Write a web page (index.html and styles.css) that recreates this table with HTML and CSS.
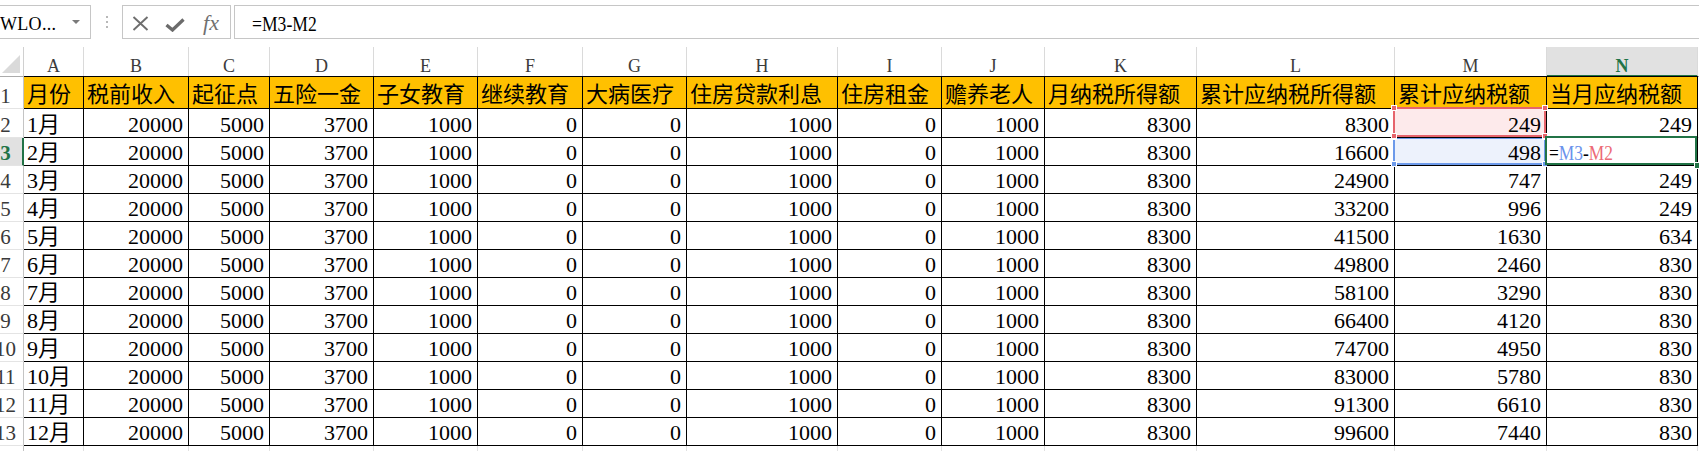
FILE: index.html
```html
<!DOCTYPE html>
<html lang="zh-CN">
<head>
<meta charset="utf-8">
<title>个税计算表</title>
<link rel="stylesheet" href="styles.css">
</head>
<body>
<div class="fbar">
  <div class="namebox"><span class="nbtext">WLO...</span><span class="dd"></span></div>
  <div class="grip"><svg width="4" height="12" viewBox="0 0 4 12"><rect x="1" y="0" width="2" height="2" fill="#b8b8b8"/><rect x="1" y="5" width="2" height="2" fill="#b8b8b8"/><rect x="1" y="10" width="2" height="2" fill="#b8b8b8"/></svg></div>
  <div class="fxbox">
    <span class="slot s1"><svg width="17" height="15" viewBox="0 0 17 15"><path d="M1.5 1 L15.5 14 M15.5 1 L1.5 14" stroke="#6e6e6e" stroke-width="1.9" fill="none"/></svg></span>
    <span class="slot s2"><svg width="20" height="14" viewBox="0 0 20 14"><path d="M1.5 7 L7.5 12 L18.5 1.5" stroke="#6b6b6b" stroke-width="3.3" fill="none"/></svg></span>
    <span class="slot s3"><span class="fx">fx</span></span>
  </div>
  <div class="formula"><span class="ftext">=M3-M2</span></div>
</div>

<div class="sheet">
  <div class="corner"><span class="tri"></span></div>
  <div class="ch">A</div><div class="ch">B</div><div class="ch">C</div><div class="ch">D</div><div class="ch">E</div><div class="ch">F</div><div class="ch">G</div><div class="ch">H</div><div class="ch">I</div><div class="ch">J</div><div class="ch">K</div><div class="ch">L</div><div class="ch">M</div><div class="ch chsel">N</div><div class="chx"></div>

  <div class="rh">1</div>
  <div class="c h">月份</div><div class="c h">税前收入</div><div class="c h">起征点</div><div class="c h">五险一金</div><div class="c h">子女教育</div><div class="c h">继续教育</div><div class="c h">大病医疗</div><div class="c h">住房贷款利息</div><div class="c h">住房租金</div><div class="c h">赡养老人</div><div class="c h">月纳税所得额</div><div class="c h">累计应纳税所得额</div><div class="c h">累计应纳税额</div><div class="c h">当月应纳税额</div><div class="xc"></div>

  <div class="rh">2</div>
  <div class="c t">1月</div><div class="c">20000</div><div class="c">5000</div><div class="c">3700</div><div class="c">1000</div><div class="c">0</div><div class="c">0</div><div class="c">1000</div><div class="c">0</div><div class="c">1000</div><div class="c">8300</div><div class="c">8300</div>
  <div class="c ref-red">249<span class="hd hr tl"></span><span class="hd hr tr"></span><span class="hd hr bl"></span><span class="hd hr br"></span></div>
  <div class="c">249</div><div class="xc"></div>

  <div class="rh rhsel">3</div>
  <div class="c t">2月</div><div class="c">20000</div><div class="c">5000</div><div class="c">3700</div><div class="c">1000</div><div class="c">0</div><div class="c">0</div><div class="c">1000</div><div class="c">0</div><div class="c">1000</div><div class="c">8300</div><div class="c">16600</div>
  <div class="c ref-blue">498<span class="hd hb tl"></span><span class="hd hb tr"></span><span class="hd hb bl"></span><span class="hd hb br"></span></div>
  <div class="c t active"><span class="ctext">=<span class="rb">M3</span>-<span class="rr">M2</span></span><span class="fill"></span></div><div class="xc"></div>

  <div class="rh">4</div>
  <div class="c t">3月</div><div class="c">20000</div><div class="c">5000</div><div class="c">3700</div><div class="c">1000</div><div class="c">0</div><div class="c">0</div><div class="c">1000</div><div class="c">0</div><div class="c">1000</div><div class="c">8300</div><div class="c">24900</div><div class="c">747</div><div class="c">249</div><div class="xc"></div>

  <div class="rh">5</div>
  <div class="c t">4月</div><div class="c">20000</div><div class="c">5000</div><div class="c">3700</div><div class="c">1000</div><div class="c">0</div><div class="c">0</div><div class="c">1000</div><div class="c">0</div><div class="c">1000</div><div class="c">8300</div><div class="c">33200</div><div class="c">996</div><div class="c">249</div><div class="xc"></div>

  <div class="rh">6</div>
  <div class="c t">5月</div><div class="c">20000</div><div class="c">5000</div><div class="c">3700</div><div class="c">1000</div><div class="c">0</div><div class="c">0</div><div class="c">1000</div><div class="c">0</div><div class="c">1000</div><div class="c">8300</div><div class="c">41500</div><div class="c">1630</div><div class="c">634</div><div class="xc"></div>

  <div class="rh">7</div>
  <div class="c t">6月</div><div class="c">20000</div><div class="c">5000</div><div class="c">3700</div><div class="c">1000</div><div class="c">0</div><div class="c">0</div><div class="c">1000</div><div class="c">0</div><div class="c">1000</div><div class="c">8300</div><div class="c">49800</div><div class="c">2460</div><div class="c">830</div><div class="xc"></div>

  <div class="rh">8</div>
  <div class="c t">7月</div><div class="c">20000</div><div class="c">5000</div><div class="c">3700</div><div class="c">1000</div><div class="c">0</div><div class="c">0</div><div class="c">1000</div><div class="c">0</div><div class="c">1000</div><div class="c">8300</div><div class="c">58100</div><div class="c">3290</div><div class="c">830</div><div class="xc"></div>

  <div class="rh">9</div>
  <div class="c t">8月</div><div class="c">20000</div><div class="c">5000</div><div class="c">3700</div><div class="c">1000</div><div class="c">0</div><div class="c">0</div><div class="c">1000</div><div class="c">0</div><div class="c">1000</div><div class="c">8300</div><div class="c">66400</div><div class="c">4120</div><div class="c">830</div><div class="xc"></div>

  <div class="rh">10</div>
  <div class="c t">9月</div><div class="c">20000</div><div class="c">5000</div><div class="c">3700</div><div class="c">1000</div><div class="c">0</div><div class="c">0</div><div class="c">1000</div><div class="c">0</div><div class="c">1000</div><div class="c">8300</div><div class="c">74700</div><div class="c">4950</div><div class="c">830</div><div class="xc"></div>

  <div class="rh">11</div>
  <div class="c t">10月</div><div class="c">20000</div><div class="c">5000</div><div class="c">3700</div><div class="c">1000</div><div class="c">0</div><div class="c">0</div><div class="c">1000</div><div class="c">0</div><div class="c">1000</div><div class="c">8300</div><div class="c">83000</div><div class="c">5780</div><div class="c">830</div><div class="xc"></div>

  <div class="rh">12</div>
  <div class="c t">11月</div><div class="c">20000</div><div class="c">5000</div><div class="c">3700</div><div class="c">1000</div><div class="c">0</div><div class="c">0</div><div class="c">1000</div><div class="c">0</div><div class="c">1000</div><div class="c">8300</div><div class="c">91300</div><div class="c">6610</div><div class="c">830</div><div class="xc"></div>

  <div class="rh">13</div>
  <div class="c t">12月</div><div class="c">20000</div><div class="c">5000</div><div class="c">3700</div><div class="c">1000</div><div class="c">0</div><div class="c">0</div><div class="c">1000</div><div class="c">0</div><div class="c">1000</div><div class="c">8300</div><div class="c">99600</div><div class="c">7440</div><div class="c">830</div><div class="xc"></div>

  <div class="rh rhlast"></div>
  <div class="xr"></div><div class="xr"></div><div class="xr"></div><div class="xr"></div><div class="xr"></div><div class="xr"></div><div class="xr"></div><div class="xr"></div><div class="xr"></div><div class="xr"></div><div class="xr"></div><div class="xr"></div><div class="xr"></div><div class="xr"></div><div class="xr"></div>
</div>
</body>
</html>
```

FILE: styles.css
```css
* { box-sizing: border-box; }

html, body {
  margin: 0;
  padding: 0;
  overflow: hidden;
  background: #ffffff;
}

body {
  width: 1699px;
  height: 451px;
  font-family: "Liberation Serif", "Noto Sans CJK SC", serif;
  color: #000;
}

/* ---------- formula bar ---------- */
.fbar {
  display: flex;
  align-items: flex-start;
  height: 47px;
}

.namebox {
  margin-left: -22px;
  margin-top: 5px;
  width: 113px;
  height: 34px;
  border: 1px solid #c6c6c6;
  display: flex;
  align-items: center;
  padding: 4px 10px 0 21px;
  font-size: 18px;
  line-height: 18px;
}

.nbtext { white-space: nowrap; letter-spacing: 0.3px; }

.dd {
  margin-left: auto;
  margin-top: -5px;
  width: 0;
  height: 0;
  border-left: 4px solid transparent;
  border-right: 4px solid transparent;
  border-top: 4px solid #7a7a7a;
}

.grip {
  width: 31px;
  height: 47px;
  display: flex;
  justify-content: center;
  padding-top: 16px;
}

.fxbox {
  margin-top: 5px;
  width: 109px;
  height: 34px;
  border: 1px solid #c6c6c6;
  display: flex;
  align-items: center;
}

.slot {
  display: flex;
  justify-content: center;
  align-items: center;
  height: 32px;
}
.s1 { width: 34px; padding-top: 3px; }
.s2 { width: 36px; padding-top: 6px; }
.s3 { width: 36px; padding-top: 1px; }

.fx {
  font-family: "Liberation Serif", serif;
  font-style: italic;
  font-size: 22px;
  color: #707070;
  line-height: 22px;
}

.formula {
  margin-top: 5px;
  margin-left: 3px;
  flex: 1;
  height: 34px;
  border: 1px solid #c6c6c6;
  border-right: none;
  display: flex;
  align-items: center;
  padding: 3px 0 0 17px;
}

.ftext {
  display: inline-block;
  font-size: 22px;
  line-height: 22px;
  transform: scaleX(0.8);
  transform-origin: left center;
  white-space: nowrap;
}

/* ---------- sheet grid ---------- */
.sheet {
  display: grid;
  grid-template-columns: 36px 60px 105px 81px 104px 104px 105px 104px 151px 104px 103px 152px 198px 152px 151px 60px;
  grid-template-rows: 30px 32px 29px repeat(11, 28px) 10px;
  margin-left: -12px;
  width: max-content;
}

.corner {
  border-right: 1px solid #d0d0d0;
  border-bottom: 1px solid #ababab;
  display: flex;
  justify-content: flex-end;
  align-items: flex-end;
  padding: 0 3px 3px 0;
}

.tri {
  width: 0;
  height: 0;
  border-left: 18px solid transparent;
  border-bottom: 18px solid #dadada;
}

.ch {
  border-right: 1px solid #dadada;
  border-bottom: 1px solid #000;
  display: flex;
  justify-content: center;
  align-items: flex-end;
  padding-bottom: 1px;
  font-size: 18px;
  line-height: 18px;
  color: #3c3c3c;
}

.chsel {
  background: #e1e1e1;
  color: #217346;
  font-weight: bold;
  border-bottom: 2px solid #217346;
  padding-bottom: 0;
}

.chx {
  border-bottom: 1px solid #ababab;
}

.rh {
  border-right: 1px solid #c4c4c4;
  border-bottom: 1px solid #e4e4e4;
  display: flex;
  justify-content: center;
  align-items: flex-end;
  padding-bottom: 1px;
  font-size: 21px;
  line-height: 21px;
  color: #3a3a3a;
}

.rhsel {
  background: #e1e1e1;
  color: #217346;
  font-weight: bold;
  border-right: 2px solid #217346;
  padding-left: 1px;
}

.rhlast { border-bottom: none; }

.c {
  border-right: 1px solid #000;
  border-bottom: 1px solid #000;
  display: flex;
  justify-content: flex-end;
  align-items: flex-end;
  padding: 0 5px 0 3px;
  font-size: 22px;
  line-height: 24px;
  white-space: nowrap;
  overflow: hidden;
}

.t { justify-content: flex-start; }

.h {
  background: #ffc000;
  border-top: 1px solid #000;
  margin-top: -1px;
  justify-content: flex-start;
  align-items: center;
  font-family: "Noto Sans CJK SC", sans-serif;
  font-size: 22px;
  line-height: 22px;
  padding-bottom: 1px;
}

.xc {
  border-bottom: 1px solid #e1e1e1;
}

.xr {
  border-right: 1px solid #e1e1e1;
}

/* ---------- formula references & active cell ---------- */
.ref-red,
.ref-blue,
.active {
  position: relative;
  overflow: visible;
}

.ref-red { background: #fdeaeb; z-index: 3; }
.ref-blue { background: #edf2fc; z-index: 2; }
.active { z-index: 4; padding-left: 2px; }

.ref-red::after,
.ref-blue::after,
.active::after {
  content: "";
  position: absolute;
  left: -2px;
  right: 0;
  bottom: 0;
  border: 2px solid #e6646c;
  pointer-events: none;
}

.ref-red::after { top: -2px; }
.ref-blue::after { top: -1px; border-color: #6d9aea; }
.active::after { top: -2px; border-color: #217346; }

.hd {
  position: absolute;
  width: 6px;
  height: 6px;
  border: 1px solid #fff;
  z-index: 1;
}
.hr { background: #e6646c; }
.hb { background: #6d9aea; }
.tl { left: -4px; top: -4px; }
.tr { right: -2px; top: -4px; }
.bl { left: -4px; bottom: -2px; }
.br { right: -2px; bottom: -2px; }

.ctext {
  display: inline-block;
  font-size: 20px;
  line-height: 24px;
  transform: scaleX(0.87);
  transform-origin: left center;
}

.rb { color: #6b92ec; }
.rr { color: #ec6a76; }

.fill {
  position: absolute;
  right: -4px;
  bottom: -4px;
  width: 7px;
  height: 7px;
  background: #217346;
  border: 1px solid #fff;
  z-index: 2;
}
```
